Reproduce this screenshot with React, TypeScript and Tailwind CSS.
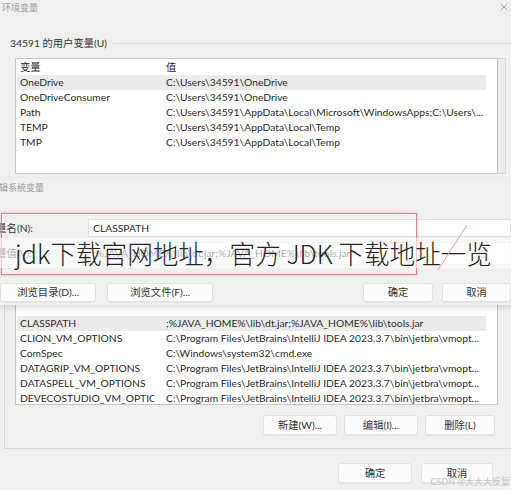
import React from "react";

const userRows: [string, string][] = [
  ["OneDrive", "C:\\Users\\34591\\OneDrive"],
  ["OneDriveConsumer", "C:\\Users\\34591\\OneDrive"],
  ["Path", "C:\\Users\\34591\\AppData\\Local\\Microsoft\\WindowsApps;C:\\Users\\..."],
  ["TEMP", "C:\\Users\\34591\\AppData\\Local\\Temp"],
  ["TMP", "C:\\Users\\34591\\AppData\\Local\\Temp"],
];

const idea = "C:\\Program Files\\JetBrains\\IntelliJ IDEA 2023.3.7\\bin\\jetbra\\vmopt...";
const sysRows: [string, string][] = [
  ["CLASSPATH", ";%JAVA_HOME%\\lib\\dt.jar;%JAVA_HOME%\\lib\\tools.jar"],
  ["CLION_VM_OPTIONS", idea],
  ["ComSpec", "C:\\Windows\\system32\\cmd.exe"],
  ["DATAGRIP_VM_OPTIONS", idea],
  ["DATASPELL_VM_OPTIONS", idea],
  ["DEVECOSTUDIO_VM_OPTIONS", idea],
];

function Row({ name, value, hl }: { name: string; value: string; hl?: boolean }) {
  return (
    <div className={`flex h-[15px] leading-[15px] w-[469px] ml-[1px] ${hl ? "bg-[#ebebeb]" : ""}`}>
      <div className="w-[149px] pl-[3px] pr-[12px]">
        <div className="overflow-hidden whitespace-nowrap">{name}</div>
      </div>
      <div className="flex-1 whitespace-nowrap overflow-hidden">{value}</div>
    </div>
  );
}

function Btn({ label, w }: { label: string; w: string }) {
  return (
    <div
      className={`${w} h-full flex items-center justify-center bg-[#fcfcfc] border border-[#e2e2e2] rounded-[3px] text-[#333] shadow-[0_1px_0_rgba(0,0,0,0.04)]`}
    >
      {label}
    </div>
  );
}

export default function App() {
  return (
    <div className="w-[511px] h-[490px] relative overflow-hidden bg-[#f0f0f0] text-[10.3px] leading-none text-[#2b2b2b] font-['Lato','Noto_Sans_CJK_SC',sans-serif]">
      {/* underlying dialog: user variables */}
      <div className="h-[178px] flex flex-col">
        <div className="h-[15px] flex items-center justify-between pl-[2px] pr-[3px]">
          <span className="text-[#9c9c9c] text-[9px]">环境变量</span>
          <svg width="8" height="8" viewBox="0 0 8 8" className="mt-[-2px]">
            <path d="M0.5 0.5L7.5 7.5M7.5 0.5L0.5 7.5" stroke="#a0a0a0" strokeWidth="0.9" />
          </svg>
        </div>
        <div className="h-[22px]" />
        <div className="h-[13px] flex items-center pl-[10px]">
          <span className="text-[#333]">34591 的用户变量(U)</span>
          <div className="flex-1 h-px bg-[#dcdcdc] ml-[6px]" />
        </div>
        <div className="h-[8px]" />
        <div className="flex h-[116px] pl-[15px]">
          <div className="w-[483px] bg-white border border-[#c6c6c6] pt-px">
            <Row name="变量" value="值" />
            {userRows.map(([n, v], i) => (
              <Row key={n} name={n} value={v} hl={i === 0} />
            ))}
          </div>
          <div className="w-[8px] bg-[#ececec] border-r border-t border-b border-[#d6d6d6]" />
        </div>
      </div>

      {/* overlay dialog: edit system variable */}
      <div className="h-[127px] flex flex-col relative z-10 bg-[#f0f0f0] shadow-[0_3px_6px_rgba(0,0,0,0.12)]">
        <div className="h-[3px]" />
        <div className="h-[13px] flex items-center ml-[-10px] text-[9px] text-[#9c9c9c] whitespace-nowrap">编辑系统变量</div>
        <div className="h-[25px]" />
        <div className="h-[18px] flex items-center">
          <div className="w-[102px] ml-[-14px] text-[#333] whitespace-nowrap">变量名(N):</div>
          <div className="flex-1 h-full bg-white border border-[#e0e0e0] flex items-center pl-[4px]">CLASSPATH</div>
        </div>
        <div className="h-[5px]" />
        <div className="h-[23px] flex items-center">
          <div className="w-[102px] ml-[-14px] text-[#333] whitespace-nowrap">变量值(V):</div>
          <div className="flex-1 h-full bg-white border border-[#e0e0e0] flex items-center pl-[4px] whitespace-nowrap">
            ;%JAVA_HOME%\lib\dt.jar;%JAVA_HOME%\lib\tools.jar
          </div>
        </div>
        <div className="h-[18px]" />
        <div className="h-[19px] flex">
          <Btn label="浏览目录(D)..." w="w-[98px]" />
          <div className="w-[11px]" />
          <Btn label="浏览文件(F)..." w="w-[108px]" />
          <div className="w-[152px]" />
          <Btn label="确定" w="w-[72px]" />
          <div className="w-[9px]" />
          <Btn label="取消" w="w-[70px]" />
        </div>
        <div className="h-[3px]" />
      </div>

      {/* underlying dialog: system variables */}
      <div className="h-[185px] flex flex-col">
        <div className="h-[144px] ml-[4px] border-l border-b border-[#d8d8d8] flex flex-col">
          <div className="h-[100px] flex ml-[10px]">
            <div className="w-[483px] bg-white border-l border-r border-b border-[#c6c6c6] pt-[11px] overflow-hidden">
              {sysRows.map(([n, v], i) => (
                <Row key={n} name={n} value={v} hl={i === 0} />
              ))}
            </div>
          </div>
          <div className="h-[10px]" />
          <div className="h-[20px] flex pl-[258px]">
            <Btn label="新建(W)..." w="w-[74px]" />
            <div className="w-[7px]" />
            <Btn label="编辑(I)..." w="w-[74px]" />
            <div className="w-[7px]" />
            <Btn label="删除(L)" w="w-[70px]" />
          </div>
        </div>
        <div className="h-[14px]" />
        <div className="h-[20px] flex pl-[338px]">
          <Btn label="确定" w="w-[74px]" />
          <div className="w-[9px]" />
          <Btn label="取消" w="w-[72px]" />
        </div>
      </div>

      {/* annotation overlays */}
      <div className="absolute left-[1px] top-[213px] w-[416px] h-[62px] border-[1.5px] border-[#dc8490] shadow-[0_0_3px_rgba(230,140,155,0.6)] z-20" />
      <div className="absolute left-0 right-0 top-[238px] h-[30px] bg-white/60 z-30 flex items-center pl-[15px] whitespace-nowrap text-[25.6px] leading-[30px] text-[#222] font-['Noto_Sans_CJK_SC',sans-serif] font-light">
        jdk下载官网地址，官方 JDK 下载地址一览
      </div>
      <svg className="absolute left-[436px] top-[224px] z-40" width="33" height="48" viewBox="0 0 33 48">
        <path d="M31 1L2 46" stroke="#e3a2b0" strokeWidth="1" />
      </svg>
      <div className="absolute right-[1px] top-[477px] z-40 text-[9px] text-[#c4c4c4] whitespace-nowrap">
        CSDN @大大大反复
      </div>
    </div>
  );
}
